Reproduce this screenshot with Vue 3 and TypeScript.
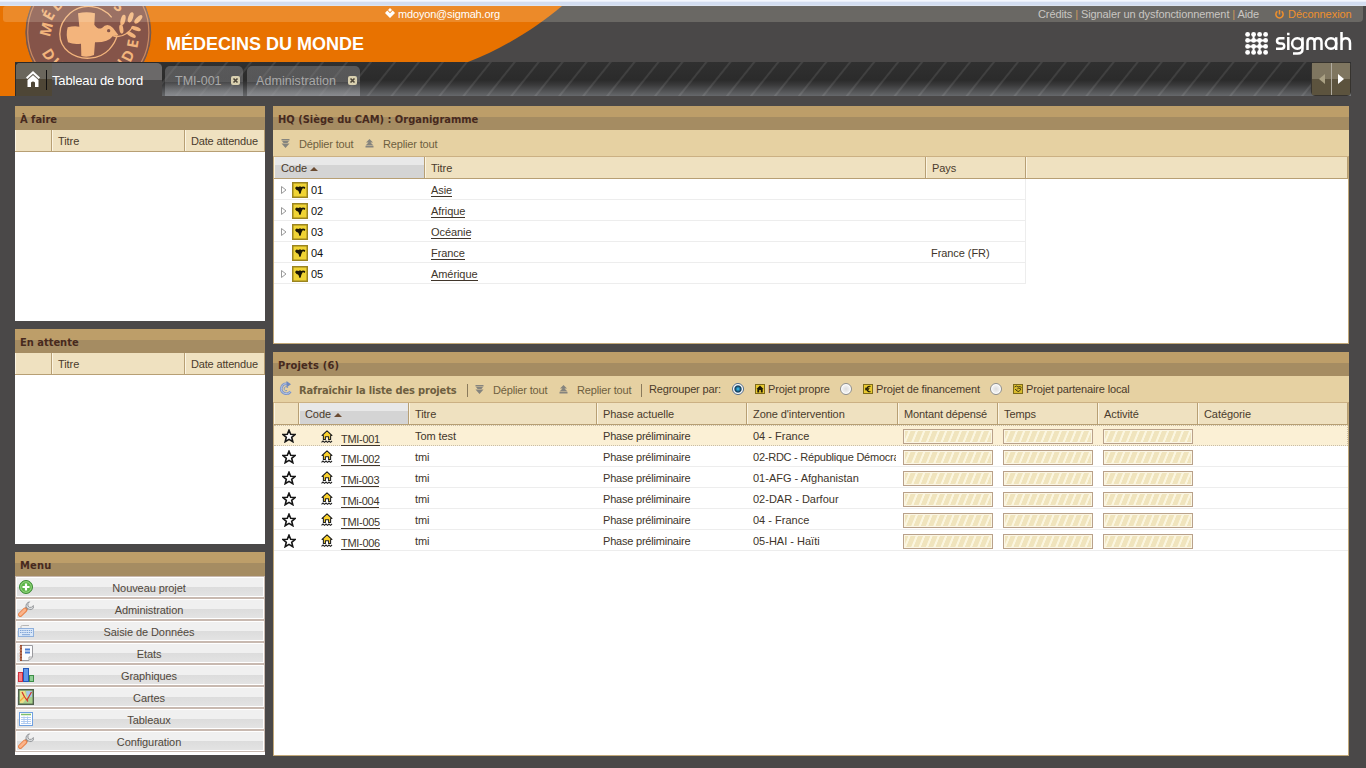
<script setup lang="ts">
interface Unit { code: string; title: string; country?: string; leaf?: boolean }
interface Project { code: string; title: string; zone: string }
interface MenuItem { label: string; icon: string }

const units: Unit[] = [
  { code: '01', title: 'Asie' },
  { code: '02', title: 'Afrique' },
  { code: '03', title: 'Océanie' },
  { code: '04', title: 'France', country: 'France (FR)', leaf: true },
  { code: '05', title: 'Amérique' },
]
const projects: Project[] = [
  { code: 'TMI-001', title: 'Tom test', zone: '04 - France' },
  { code: 'TMI-002', title: 'tmi', zone: '02-RDC - République Démocratique' },
  { code: 'TMi-003', title: 'tmi', zone: '01-AFG - Afghanistan' },
  { code: 'TMi-004', title: 'tmi', zone: '02-DAR - Darfour' },
  { code: 'TMI-005', title: 'tmi', zone: '04 - France' },
  { code: 'TMI-006', title: 'tmi', zone: '05-HAI - Haïti' },
]
const menu: MenuItem[] = [
  { label: 'Nouveau projet', icon: 'add' },
  { label: 'Administration', icon: 'wrench' },
  { label: 'Saisie de Données', icon: 'keyboard' },
  { label: 'Etats', icon: 'report' },
  { label: 'Graphiques', icon: 'chart' },
  { label: 'Cartes', icon: 'map' },
  { label: 'Tableaux', icon: 'table' },
  { label: 'Configuration', icon: 'wrench' },
]
const tasks = ['À faire', 'En attente']
</script>

<template>
  <div class="page">
    <div class="chrome-edge"></div>
    <header class="banner">
      <svg class="backdrop" width="1366" height="56" viewBox="0 6 1366 56">
        <path d="M0 6H562C538 26 505 48 468 62H0Z" fill="#e87200" />
        <circle cx="88.3" cy="32.5" r="62.5" fill="#855449" stroke="#6f5a52" stroke-width="1" />
        <circle cx="88.3" cy="32.5" r="60.6" fill="none" stroke="#c98a62" stroke-width="1.2" />
        <g transform="translate(14 0) scale(.33333)" fill="#f3b47c">
          <path d="M293 52C262 14 205 8 168 40C128 76 128 128 164 156C200 184 256 180 286 148C300 132 306 122 309 106" fill="none" stroke="#f3b47c" stroke-width="4" />
          <path d="M192 40Q218 33 243 40L241 74Q252 90 264 84Q280 66 297 84L313 105L297 108Q282 128 243 127L240 165Q220 174 202 168L201 131Q180 135 162 127Q155 104 161 82Q180 77 196 80Z" />
          <circle cx="284" cy="92" r="5" fill="#855449" />
          <path d="M298 108Q335 116 358 78" fill="none" stroke="#f3b47c" stroke-width="4" />
          <ellipse cx="327" cy="60" rx="7" ry="16" transform="rotate(14 327 60)" />
          <ellipse cx="350" cy="52" rx="7" ry="16" transform="rotate(20 350 52)" />
          <ellipse cx="373" cy="58" rx="7" ry="16" transform="rotate(42 373 58)" />
          <ellipse cx="322" cy="87" rx="6" ry="14" transform="rotate(-8 322 87)" />
          <ellipse cx="366" cy="86" rx="6" ry="15" transform="rotate(-72 366 86)" />
          <ellipse cx="352" cy="104" rx="6" ry="15" transform="rotate(-60 352 104)" />
          <g class="seal">
            <text transform="translate(97 88) rotate(-76)" y="16">M</text>
            <text transform="translate(104 46) rotate(-60)" y="16">É</text>
            <text transform="translate(130 14) rotate(-42)" y="16">D</text>
            <text transform="translate(316 18) rotate(40)" y="16">S</text>
            <text transform="translate(104 164) rotate(58)" y="16">D</text>
            <text transform="translate(130 193) rotate(42)" y="16">U</text>
            <text transform="translate(356 131) rotate(-80)" y="16">E</text>
            <text transform="translate(342 168) rotate(-64)" y="16">D</text>
            <text transform="translate(316 198) rotate(-48)" y="16">N</text>
          </g>
        </g>
      </svg>
      <div class="userbar">
        <div class="user">
          <svg width="10" height="10" viewBox="0 0 10 10"><path d="M5 0L7 2L5 4L3 2ZM2.300 2.600L5 5.300L7.700 2.600L10 4.900L7.500 7.400L5 9.900L0 4.900Z" fill="#fff" /></svg>
          <span>mdoyon@sigmah.org</span>
        </div>
        <div class="links"><span>Crédits</span> <i>|</i> <span>Signaler un dysfonctionnement</span> <i>|</i> <span>Aide</span></div>
        <div class="logout">
          <svg width="9" height="9" viewBox="0 0 9 9" fill="none" stroke="#f0902c" stroke-width="1.5"><path d="M2.4 1.4A3.6 3.6 0 1 0 6.6 1.4M4.5 0V4.6" /></svg>
          <span>Déconnexion</span>
        </div>
      </div>
      <div class="brand">
        <h1>MÉDECINS DU MONDE</h1>
        <svg class="sigmah" width="107" height="26" viewBox="0 0 107 26">
          <g fill="#fff">
            <template v-for="r in 4" :key="r">
              <circle v-for="c in 4" :key="c" :cx="c * 6 - 3.4" :cy="r * 6 - 3.6" r="2.4" />
            </template>
          </g>
          <path d="M2.6 8.4H20.6M2.6 14.4H20.6M8.6 2.4V8M14.6 8V20M8.6 14V20" stroke="#fff" stroke-width="2" />
          <g fill="none" stroke="#fff" stroke-width="2.5">
            <path d="M39.500 6.300H35Q32 6.300 32 9Q32 11.400 35 11.400H36.500Q39.200 11.400 39.200 14Q39.200 16.700 36.500 16.700H31M43.300 5V18M43.300 .7V3.200" />
            <circle cx="52.300" cy="11.500" r="5.200" /><path d="M57.500 5.200V17Q57.500 21.500 52.500 21.500H48M62.500 18V10Q62.500 6.300 66 6.300T69.500 10V18M69.500 10Q69.500 6.300 73 6.300T76.500 10V18" />
            <circle cx="86" cy="11.500" r="5.200" /><path d="M91.200 5.200V18M96.500 0V18M96.500 11Q96.500 6.300 100.700 6.300T105 11V18" />
          </g>
        </svg>
      </div>
    </header>

    <nav class="tabs">
      <div class="strip">
        <div class="tab active">
          <div class="home">
            <svg width="16" height="17" viewBox="0 0 16 17"><path d="M8 0L15 6.600L13.800 8L8 2.800L2.200 8L1 6.600Z" fill="#fff" /><path d="M2.500 9L8 4.200L13.500 9V16H10V11.500Q8 9.500 6 11.500V16H2.500Z" fill="#fff" /></svg>
          </div>
          <span>Tableau de bord</span>
        </div>
        <div class="tab t1"><span>TMI-001</span><svg class="x" width="9" height="9" viewBox="0 0 9 9"><rect width="9" height="9" rx="2" fill="#d9d0b0" /><path d="M2.500 2.500L6.500 6.500M6.500 2.500L2.500 6.500" stroke="#4d4538" stroke-width="1.600" /></svg></div>
        <div class="tab t2"><span>Administration</span><svg class="x" width="9" height="9" viewBox="0 0 9 9"><rect width="9" height="9" rx="2" fill="#d9d0b0" /><path d="M2.500 2.500L6.500 6.500M6.500 2.500L2.500 6.500" stroke="#4d4538" stroke-width="1.600" /></svg></div>
        <div class="scroller">
          <b><svg width="6" height="10" viewBox="0 0 6 10"><path d="M6 0V10L0 5Z" fill="#aaa184" /></svg></b>
          <b><svg width="6" height="10" viewBox="0 0 6 10"><path d="M0 0V10L6 5Z" fill="#fff" /></svg></b>
        </div>
      </div>
    </nav>

    <main class="body">
      <aside class="side">
        <section v-for="t in tasks" :key="t" class="panel task">
          <h2>{{ t }}</h2>
          <div class="thead task-cols"><span></span><span>Titre</span><span>Date attendue</span></div>
        </section>
        <section class="panel menu">
          <h2>Menu</h2>
          <div v-for="m in menu" :key="m.label" class="item">
            <svg width="16" height="16" viewBox="0 0 16 16">
              <template v-if="m.icon === 'add'">
                <circle cx="8" cy="8" r="6.500" fill="#5cb648" stroke="#3d8b37" /><circle cx="8" cy="8" r="5.300" fill="none" stroke="#a4dc90" stroke-width=".8" /><path d="M8 4.500V11.500M4.500 8H11.500" stroke="#fff" stroke-width="2.200" />
              </template>
              <template v-else-if="m.icon === 'wrench'">
                <path d="M7 9L10 6" stroke="#8d9094" stroke-width="3.200" /><path d="M11.500 .8L10 2.500V5L11.300 6.300H13.500L15.300 4.500Q16.300 7.800 13.500 8.500Q11.500 9 10 7.800L8 6Q7.500 2 11.500 .8Z" fill="#d8dadc" stroke="#86898d" stroke-width=".8" /><path d="M2.300 13.700L7 9" stroke="#e8844c" stroke-width="4.600" stroke-linecap="round" /><path d="M2.300 13.500L6.800 9" stroke="#fbb48a" stroke-width="2.600" stroke-linecap="round" />
              </template>
              <template v-else-if="m.icon === 'keyboard'">
                <path d="M3 5V3.500Q3 2.500 4.500 2.500H11" fill="none" stroke="#b5b5b5" /><rect x=".5" y="5.500" width="15" height="8" fill="#d9e7f8" stroke="#8fb0dc" /><path d="M2 7.500H14M2 9.500H14" stroke="#7fa3d6" stroke-dasharray="1.400 .8" /><path d="M4 11.700H12" stroke="#7fa3d6" />
              </template>
              <template v-else-if="m.icon === 'report'">
                <path d="M2.500 .5H14.500V12L11 15.500H2.500Z" fill="#fcfcfd" stroke="#9a9a9e" /><path d="M3 0V16" stroke="#9b4a2e" stroke-width="2" /><path d="M1 2H4M1 5H4M1 8H4M1 11H4M1 14H4" stroke="#d9a58c" stroke-width=".8" /><path d="M7 4.500H12M7 7.500H12" stroke="#4d7fd0" stroke-width="2" /><path d="M11 15V12H14" fill="none" stroke="#aaa" />
              </template>
              <template v-else-if="m.icon === 'chart'">
                <rect x=".5" y="5.500" width="4" height="9" fill="#f77e85" stroke="#cf2f3d" /><rect x="5.500" y="1.500" width="5" height="13" fill="#5f97ea" stroke="#2458b8" /><rect x="11.500" y="8.500" width="4" height="6" fill="#90cf96" stroke="#3f8d47" />
              </template>
              <template v-else-if="m.icon === 'map'">
                <rect x=".7" y=".7" width="14.600" height="14.600" fill="#a9d08e" stroke="#51614c" stroke-width="1.400" /><path d="M8 2H14V8H9Z" fill="#a8c8e8" /><path d="M2 2H7L9 9L5 14H2Z" fill="#e9df8a" /><path d="M4 3Q6 8 10 12.500M13.500 3L9 11" fill="none" stroke="#d3352b" stroke-width="1.200" /><path d="M2 12L6 8" stroke="#f4a83c" stroke-width="1.300" />
              </template>
              <template v-else>
                <rect x="1.500" y="1.500" width="13" height="13" fill="#fff" stroke="#6fa0e0" /><path d="M3 3.500H13" stroke="#7fbf6a" stroke-width="1.500" /><path d="M3 6.500H13M3 8.500H13M3 10.500H13M3 12.500H13M6 5.500V13M9.500 5.500V13" stroke="#a9c6ee" stroke-width=".9" />
              </template>
            </svg>
            <span>{{ m.label }}</span>
          </div>
        </section>
      </aside>

      <div class="content">
        <section class="panel org">
          <h2>HQ (Siège du CAM) : Organigramme</h2>
          <div class="toolbar org-tools">
            <svg class="arr" width="9" height="9" viewBox="0 0 9 9"><path d="M.5 0H8.500V1.500H.5ZM1 2H8L6.500 4H2.500ZM.5 4.500H8.500L4.500 9Z" fill="#85847e" /></svg>
            <span>Déplier tout</span>
            <svg class="arr" width="9" height="9" viewBox="0 0 9 9"><path d="M4.500 0L8 3.500H1ZM4.500 2.500L8.500 6.500H.5ZM.5 7H8.500V8.500H.5Z" fill="#85847e" /></svg>
            <span>Replier tout</span>
          </div>
          <div class="grid">
            <div class="thead org-cols"><span class="sorted">Code <i class="up"></i></span><span>Titre</span><span>Pays</span><span></span></div>
            <div v-for="u in units" :key="u.code" class="row org-row">
              <span class="node">
                <svg class="twist" width="6" height="8" viewBox="0 0 6 8"><path v-if="!u.leaf" d="M.5 .5V7.500L5 4Z" fill="#fff" stroke="#999" /></svg>
                <svg width="16" height="16" viewBox="0 0 16 16"><rect x=".75" y=".75" width="14.500" height="14.500" fill="#f0d435" stroke="#9a8420" stroke-width="1.500" /><path d="M3 6L4.500 4.500L6.500 5L8 4.300L9.500 5L11 4.500L13.200 5L13 6.800H12L11 6L10 7.500L9.300 9L8.700 11.500L7.500 12L6.700 9.500L6 8.500L4.500 8Z" fill="#1b1706" /></svg>
                <em>{{ u.code }}</em>
              </span>
              <span class="txt"><u>{{ u.title }}</u></span>
              <span class="txt country">{{ u.country }}</span>
            </div>
          </div>
        </section>

        <section class="panel projects">
          <h2 class="loose">Projets (6)</h2>
          <div class="toolbar prj-tools">
            <svg class="refresh" width="14" height="14" viewBox="0 0 14 14"><path d="M11.500 10.500A5 5 0 1 1 8 2.800" fill="none" stroke="#8096c4" stroke-width="2.600" /><path d="M11.500 10.500A5 5 0 1 1 8 2.800" fill="none" stroke="#b4c5e8" stroke-width="1" /><path d="M7.500 0L12 3.200L7.500 6.500Z" fill="#6f88bd" /><path d="M9 7A2 2 0 1 0 8 9.500" fill="none" stroke="#8096c4" /></svg>
            <strong>Rafraîchir la liste des projets</strong>
            <i class="bar"></i>
            <svg class="arr" width="9" height="9" viewBox="0 0 9 9"><path d="M.5 0H8.500V1.500H.5ZM1 2H8L6.500 4H2.500ZM.5 4.500H8.500L4.500 9Z" fill="#85847e" /></svg>
            <span>Déplier tout</span>
            <svg class="arr" width="9" height="9" viewBox="0 0 9 9"><path d="M4.500 0L8 3.500H1ZM4.500 2.500L8.500 6.500H.5ZM.5 7H8.500V8.500H.5Z" fill="#85847e" /></svg>
            <span>Replier tout</span>
            <i class="bar"></i>
            <span class="dark">Regrouper par:</span>
            <i class="radio on"></i>
            <svg class="kind" width="10" height="10" viewBox="0 0 10 10"><rect x=".5" y=".5" width="9" height="9" fill="#e9c92f" stroke="#7d6a1c" /><path d="M5 1.500L8.500 5H7.700V8.500H5.800V6H4.200V8.500H2.300V5H1.500Z" fill="#1d1906" /></svg>
            <span class="dark">Projet propre</span>
            <i class="radio"></i>
            <svg class="kind" width="10" height="10" viewBox="0 0 10 10"><rect x=".5" y=".5" width="9" height="9" fill="#e9c92f" stroke="#7d6a1c" /><path d="M7.500 2.500A2.700 2.700 0 1 0 7.500 7.500M2 4.300H6.500M2 5.800H6" fill="none" stroke="#1d1906" stroke-width="1.100" /></svg>
            <span class="dark">Projet de financement</span>
            <i class="radio"></i>
            <svg class="kind" width="10" height="10" viewBox="0 0 10 10"><rect x=".5" y=".5" width="9" height="9" fill="#d9bb2c" stroke="#7d6a1c" /><path d="M1.500 3L3.500 2L5 3L7 2.500L8.500 3.500M2 5L4 7L6 7.500L8 5L5.500 4L4 5.500" fill="none" stroke="#4d4212" /></svg>
            <span class="dark">Projet partenaire local</span>
          </div>
          <div class="grid">
            <div class="thead prj-cols"><span></span><span class="sorted">Code <i class="up"></i></span><span>Titre</span><span>Phase actuelle</span><span>Zone d'intervention</span><span class="tight">Montant dépensé</span><span>Temps</span><span>Activité</span><span>Catégorie</span></div>
            <div v-for="(p, i) in projects" :key="p.code" class="row prj-cols prj-row" :class="{ picked: i === 0 }">
              <span class="star"><svg width="14" height="14" viewBox="0 0 14 14"><path d="M7 1.200L8.700 5.200L13 5.500L9.700 8.300L10.800 12.700L7 10.400L3.200 12.700L4.300 8.300L1 5.500L5.300 5.200Z" fill="#fff" stroke="#151515" stroke-width="1.600" /></svg></span>
              <span class="pcode"><svg width="12" height="13" viewBox="0 0 12 13"><path d="M6 .8L10.900 5.500H9.600V9.500H7.600V6.800H4.400V9.500H2.400V5.500H1.100Z" fill="#fbd22c" stroke="#222" stroke-width="1.100" stroke-linejoin="round" /><path d="M3.200 5L6 2.300L8.800 5V6H3.200Z" fill="#fbd22c" /><path d="M.5 12.300L2 11L3.500 12.300L5 11L6.500 12.300L8 11L9.500 12.300L11 11" fill="none" stroke="#222" stroke-width="1.100" /></svg><u>{{ p.code }}</u></span>
              <span class="txt">{{ p.title }}</span>
              <span class="txt phase">Phase préliminaire</span>
              <span class="txt zone" :class="{ long: p.zone.length > 25 }">{{ p.zone }}</span>
              <span class="gauge"><i></i></span>
              <span class="gauge"><i></i></span>
              <span class="gauge"><i></i></span>
              <span></span>
            </div>
          </div>
        </section>
      </div>
    </main>
  </div>
</template>

<style>
body { margin: 0; background: #4a4848; overflow: hidden; }
</style>

<style scoped>
* { box-sizing: border-box; }
.page { width: 1366px; height: 768px; overflow: hidden; background: #4a4848; font: 11px/13px "Liberation Sans", Arial, sans-serif; color: #4a3b2c; display: flex; flex-direction: column; }
svg { display: block; flex: none; }
i, em { font-style: normal; }
.chrome-edge { height: 6px; flex: none; background: linear-gradient(#f4f7fd 0 1px, #e9eef9 1px 2px, #d3ddf0 2px 5px, #dde4f0 5px); }
.banner { position: relative; height: 56px; flex: none; }
.backdrop { position: absolute; left: 0; top: 0; }
.seal text { font: bold 45px "Open Sans", sans-serif; text-anchor: middle; }
.userbar { position: relative; height: 16px; margin: 0 3px; background: rgba(255,250,230,.18); border-radius: 3px 0 4px 3px; display: flex; align-items: center; color: #c9c6c2; }
.user { display: flex; align-items: center; gap: 3px; margin-left: 382px; width: 653px; color: #fff; letter-spacing: -.17px; }
.user svg { margin-top: -2px; }
.links { width: 237px; white-space: nowrap; letter-spacing: -.09px; }
.links i { color: #d09a5c; }
.logout { display: flex; align-items: center; gap: 4px; color: #f0902c; letter-spacing: -.05px; }
.brand { position: relative; display: flex; justify-content: space-between; padding: 9px 14px 0 166px; }
h1 { margin: 3px 0 0; font: bold 18px/20px "Liberation Sans", Arial, sans-serif; color: #fff; }
.sigmah { margin-top: 1px; }
.tabs { height: 34px; flex: none; padding-left: 15px; background: linear-gradient(90deg, #e87200 15px, transparent 15px); }
.strip { width: 1336px; height: 34px; display: flex; align-items: flex-end; background: repeating-linear-gradient(128.700deg, rgba(255,255,255,0) 0 14.500px, rgba(255,255,255,.09) 15.500px 16.500px, rgba(255,255,255,0) 17.500px 18.700px), linear-gradient(#303030, #2b2b2b 18px, #3a3a3b 23px, #66686b 34px); }
.tab { display: flex; align-items: center; border-radius: 5px 5px 0 0; font-size: 13px; color: #a9a9a9; }
.tab.active { width: 147px; height: 34px; background: linear-gradient(#6b6969 0 17px, #4a4848 17px); color: #fff; border: 1px solid #2b2a29; border-width: 1px 0 0 1px; }
.home { position: relative; width: 36px; height: 33px; padding: 8px 0 0 9px; background: linear-gradient(#6a665c 0 16px, #4e4636 16px); border-radius: 4px 0 0 0; }
.home::after { content: ""; position: absolute; left: 30px; top: 7px; width: 1px; height: 20px; background: #111; }
.tab.active span { letter-spacing: -.15px; margin-top: 2px; }
.t1, .t2 { height: 30px; background: linear-gradient(rgba(130,130,132,.5) 0 16px, rgba(120,122,125,.3) 16px, rgba(150,152,156,.75)); font-size: 12.500px; }
.t1 { width: 78px; margin-left: 3px; padding-left: 10px; }
.t2 { width: 113px; margin-left: 4px; padding-left: 9px; letter-spacing: .06px; }
.tab .x { margin: -1px 3px 0 auto; }
.scroller { margin-left: auto; display: flex; height: 34px; border: 1px solid #36332e; border-radius: 4px; }
.scroller b { width: 19px; height: 32px; display: flex; align-items: center; justify-content: center; background: linear-gradient(#7f7660 0 16px, #5c533e 16px); }
.scroller b + b { border-left: 1px solid #b0aba0; }
.body { display: flex; gap: 8px; padding: 10px 0 0 15px; }
.side { width: 250px; display: flex; flex-direction: column; gap: 8px; }
.content { width: 1076px; display: flex; flex-direction: column; gap: 8px; }
.panel { background: #fff; }
.task { height: 215px; }
.menu { height: 203px; }
.org { height: 238px; }
.projects { height: 404px; }
.org, .projects { border: 1px solid #c2a878; border-top: 0; }
h2 { margin: 0; height: 24px; padding: 2px 0 0 5px; font: bold 11px/23px "DejaVu Sans Condensed", "DejaVu Sans", sans-serif; color: #47291d; background: linear-gradient(#bd9e69 0 11px, #a58c62 11px); }
.org h2, .projects h2 { margin: 0 -1px; }
.loose, .menu h2 { letter-spacing: .2px; }
.thead { display: grid; height: 23px; background: #efe1c0; border-bottom: 1px solid #b79f74; }
.thead span { border-right: 1px solid #b79f74; border-left: 1px solid #fbf4e2; padding: 5px 0 0 5px; white-space: nowrap; overflow: hidden; letter-spacing: -.08px; }
.thead .tight { letter-spacing: -.13px; }
.task .thead { height: 22px; }
.task-cols { grid-template-columns: 37px 133px 80px; }
.task-cols span:last-child { letter-spacing: -.17px; }
.thead .sorted { background: linear-gradient(#e8e8e8 0 8px, #d4d4d4 8px); }
.org-cols .sorted { padding-left: 6px; }
.up { display: inline-block; border: 4px solid transparent; border-top: 0; border-bottom-color: #6b4b31; margin: 0 0 1px; }
.item { height: 22px; border: 1px solid #c8b9b0; box-shadow: inset 0 0 0 1px #fff; background: linear-gradient(#f0f0f0 0 10px, #dcdcdc 10px, #e4e4e4); display: flex; align-items: center; padding-left: 2px; color: #51483c; }
.item span { flex: 1; text-align: center; margin-top: 3px; padding-left: 1px; letter-spacing: -.08px; }
.item svg { margin-right: -1px; margin-top: -1px; }
.toolbar { height: 26px; background: #e6d1a2; display: grid; align-items: center; white-space: nowrap; color: #6e5f3f; margin: 0 -1px; padding-top: 2px; letter-spacing: -.15px; }
.org-tools { grid-template-columns: 18px 66px 18px 100px; padding-left: 8px; }
.prj-tools { grid-template-columns: 20px 168px 8px 18px 66px 18px 64px 8px 82px 24px 13px 71px 24px 13px 113px 24px 13px 110px; padding-left: 6px; }
.prj-tools strong { font: bold 11px/13px "DejaVu Sans Condensed", "DejaVu Sans", sans-serif; letter-spacing: -.14px; }
.arr { margin-top: -2px; }
.refresh { margin-top: -4px; }
.kind { margin-top: -2px; }
.dark { color: #4a3a2a; margin-top: -1px; }
.bar { width: 1px; height: 13px; background: #8a7a5c; }
.radio { width: 12px; height: 12px; margin: -2px 0 0 1px; border-radius: 50%; border: 1px solid #8e8f8f; background: radial-gradient(#ddd, #f8f8f8 70%); box-shadow: inset 0 0 0 1px #fff; }
.radio.on { border-color: #516d8c; background: radial-gradient(circle, #36b4e6 0 .5px, #103a58 3px, #fff 4.500px); }
.grid .thead { border-top: 1px solid #cbb083; height: 23px; }
.org-cols { grid-template-columns: 151px 501px 100px 1fr; }
.row { display: grid; height: 21px; border-bottom: 1px solid #ededed; white-space: nowrap; align-items: center; color: #40352a; }
.row > .txt { padding-top: 2px; letter-spacing: -.07px; }
.org-row { grid-template-columns: 151px 501px 100px; width: 752px; border-right: 1px solid #ededed; }
.org-row > span { padding-left: 6px; }
.org-row > .country { padding-left: 5px; }
.org-row .node { display: flex; align-items: center; color: #111; padding: 1px 0 0 7px; }
.twist { margin-right: 5px; }
.node em { padding: 1px 0 0 3px; }
u { text-decoration: none; border-bottom: 1px solid #40352a; display: inline-block; line-height: 11px; }
.prj-cols { grid-template-columns: 25px 110px 188px 150px 151px 100px 100px 100px 150px; }
.prj-row > span { padding-left: 6px; overflow: hidden; }
.prj-row.picked { background: #fbf0d5; border: 1px dotted #c8bda8; border-left: 0; }
.picked > .txt, .picked > .gauge { margin-top: -1px; }
.row > .phase { letter-spacing: -.21px; }
.row > .zone { margin-right: 2px; letter-spacing: 0; }
.row > .zone.long { letter-spacing: -.24px; }
.prj-row > .star { padding: 1px 0 0 8px; }
.prj-row.picked > .star { padding-top: 0; }
.pcode { display: flex; align-items: center; height: 20px; }
.prj-row > .pcode { padding-left: 22px; }
.pcode u { margin: 7px 0 0 8px; letter-spacing: -.3px; }
.prj-row > .gauge { padding-left: 5px; }
.gauge i { display: block; width: 90px; height: 15px; margin-top: 2px; border: 1px solid #b9a18a; box-shadow: inset 0 0 0 1px #fbf6e4; background: repeating-linear-gradient(112deg, #f0e4bd 0 4px, #fbf6e0 4.800px 6.200px, #f0e4bd 6.800px); }
</style>
